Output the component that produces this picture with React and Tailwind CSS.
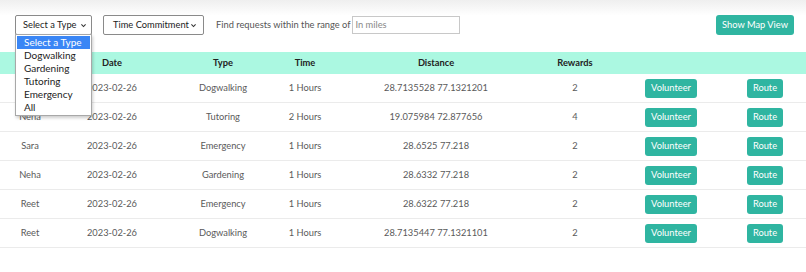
import React from "react";

const rows = [
  ["Neha", "2023-02-26", "Dogwalking", "1 Hours", "28.7135528 77.1321201", "2"],
  ["Neha", "2023-02-26", "Tutoring", "2 Hours", "19.075984 72.877656", "4"],
  ["Sara", "2023-02-26", "Emergency", "1 Hours", "28.6525 77.218", "2"],
  ["Neha", "2023-02-26", "Gardening", "1 Hours", "28.6332 77.218", "2"],
  ["Reet", "2023-02-26", "Emergency", "1 Hours", "28.6322 77.218", "2"],
  ["Reet", "2023-02-26", "Dogwalking", "1 Hours", "28.7135447 77.1321101", "2"],
];

const cols = "grid grid-cols-[60px_104px_118px_46px_216px_62px_130px_58px_12px]";

function Chevron() {
  return (
    <svg width="7" height="7" viewBox="0 0 10 10" className="shrink-0">
      <path d="M2 3.5 L5 6.5 L8 3.5" fill="none" stroke="#333" strokeWidth="1.5" />
    </svg>
  );
}

export default function App() {
  return (
    <div className="w-[806px] h-[272px] bg-white text-[9.3px] text-[#5a5a5a] overflow-hidden whitespace-nowrap" style={{ fontFamily: 'Lato, "Noto Sans", sans-serif' }}>
      <div className="h-[52px] bg-gradient-to-b from-[#efefef] via-white via-[30%] to-white pt-[15px] pl-[15px] pr-[12px] flex items-start">
        <div className="relative">
          <div className="w-[77px] h-[20px] border border-[#8a8a8a] rounded-[2px] bg-white flex items-center justify-between pl-[7px] pr-[4px] text-[#222]">
            <span>Select a Type</span>
            <Chevron />
          </div>
          <div className="absolute left-0 top-[19px] w-[77px] bg-white border border-[#a8a8a8] shadow-[1px_2px_3px_rgba(0,0,0,0.2)] py-[1px] px-[1px] text-[#222] z-10 leading-[13px] text-[10px]">
            <div className="bg-[#3a86f5] text-white pl-[7px] h-[13px]">Select a Type</div>
            <div className="pl-[7px] h-[13px]">Dogwalking</div>
            <div className="pl-[7px] h-[13px]">Gardening</div>
            <div className="pl-[7px] h-[13px]">Tutoring</div>
            <div className="pl-[7px] h-[13px]">Emergency</div>
            <div className="pl-[7px] h-[13px]">All</div>
          </div>
        </div>
        <div className="ml-[11px] w-[101px] h-[20px] border border-[#8a8a8a] rounded-[2px] bg-white flex items-center justify-between pl-[9px] pr-[6px] text-[#222]">
          <span>Time Commitment</span>
          <Chevron />
        </div>
        <div className="ml-[12px] h-[20px] flex items-center text-[#555]">
          <span>Find requests within the range of</span>
          <div className="ml-[2px] w-[108px] h-[18px] border border-[#c8c8c8] flex items-center pl-[2px] text-[#888]">In miles</div>
        </div>
        <div className="ml-auto h-[20px] px-[6px] rounded-[3px] bg-[#2fb5a1] text-white flex items-center">Show Map View</div>
      </div>
      <div className={`${cols} h-[22px] bg-[#abf8e1] items-center text-center font-bold text-[#222]`}>
        <div></div>
        <div>Date</div>
        <div>Type</div>
        <div>Time</div>
        <div>Distance</div>
        <div>Rewards</div>
        <div></div>
        <div></div>
        <div></div>
      </div>
      {rows.map((r, i) => (
        <div key={i} className={`${cols} h-[29px] items-center text-center border-b border-[#ebebeb]`}>
          {r.map((c, j) => (
            <div key={j}>{c}</div>
          ))}
          <div className="flex justify-center">
            <div className="h-[19px] px-[6px] rounded-[3px] bg-[#2fb5a1] text-white flex items-center">Volunteer</div>
          </div>
          <div className="flex justify-center">
            <div className="h-[19px] px-[6px] rounded-[3px] bg-[#2fb5a1] text-white flex items-center">Route</div>
          </div>
          <div></div>
        </div>
      ))}
    </div>
  );
}
